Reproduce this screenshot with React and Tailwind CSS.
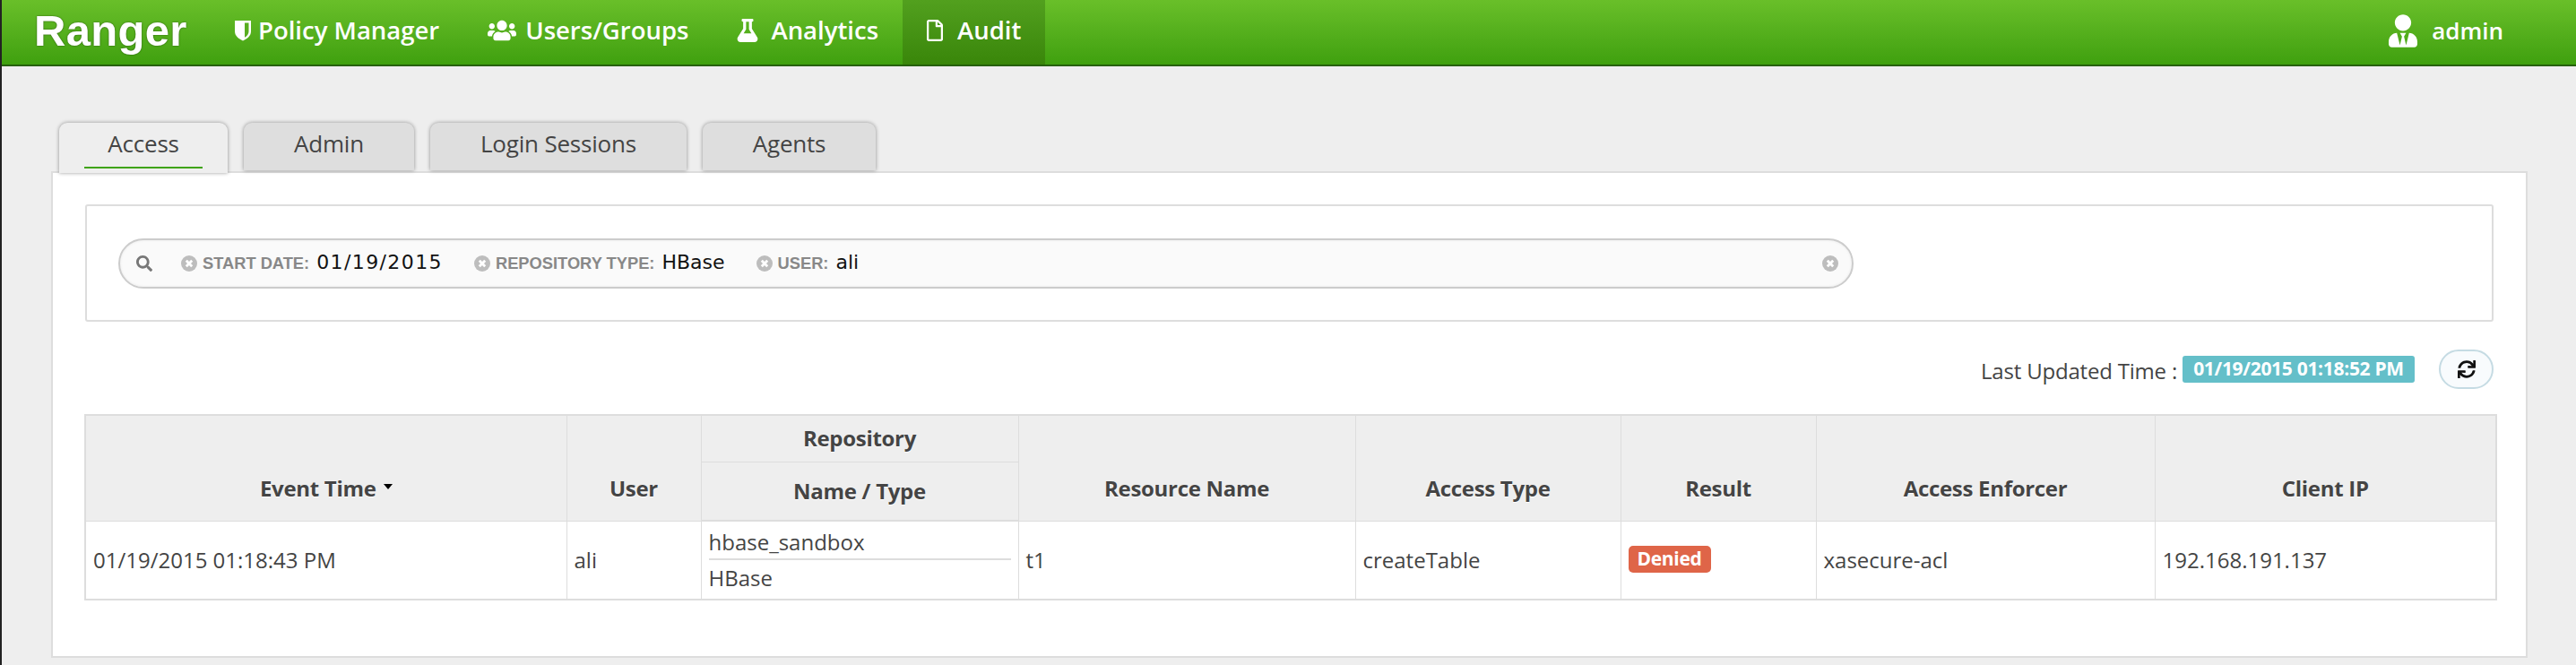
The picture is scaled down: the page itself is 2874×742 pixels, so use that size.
import { FaUsers, FaFlask, FaRegFile, FaUserTie, FaSearch, FaSync } from 'react-icons/fa'

const navLinks = [
  { label: 'Policy Manager', gap: 'gap-[8px]', icon: <ShieldIcon /> },
  { label: 'Users/Groups', gap: 'gap-[10px]', icon: <FaUsers className="w-[32px] h-[28px]" /> },
  { label: 'Analytics', gap: 'gap-[14px]', icon: <FaFlask className="w-[24px] h-[26px]" /> },
  { label: 'Audit', gap: 'gap-[16px]', icon: <FaRegFile className="w-[18px] h-[24px]" />, active: true },
]

const tabs = [
  { label: 'Access', width: 'w-[188px]', active: true },
  { label: 'Admin', width: 'w-[190px]' },
  { label: 'Login Sessions', width: 'w-[286px]' },
  { label: 'Agents', width: 'w-[193px]' },
]

const facets = [
  { label: 'START DATE:', value: '01/19/2015', gap: 'mr-[35px]', spaced: true },
  { label: 'REPOSITORY TYPE:', value: 'HBase', gap: 'mr-[35px]' },
  { label: 'USER:', value: 'ali', gap: '' },
]

function ShieldIcon() {
  return (
    <svg viewBox="0 0 18 24" className="w-[18px] h-[24px]" fill="currentColor">
      <path d="M0 1h18v12c0 5-4 8-9 10.500C4 21 0 18 0 13z" />
      <path d="M11 3.500h4.500V13c0 3.500-2.500 5.500-4.500 6.800z" fill="#58ad1e" />
    </svg>
  )
}

function ClearIcon() {
  return (
    <svg viewBox="0 0 18 20" className="w-[18px] h-[20px] shrink-0">
      <circle cx="9" cy="10" r="9" fill="#bdbdbd" />
      <path d="M5.800 6.800l6.400 6.400M12.200 6.800l-6.400 6.400" stroke="#fff" strokeWidth="2.800" />
    </svg>
  )
}

function Th({ children, className = '', ...rest }) {
  return (
    <th
      {...rest}
      className={`border border-[#ddd] bg-[#eee] text-center font-bold text-[24px] leading-[30px] tracking-[-0.3px] text-[#444] [text-shadow:0_1px_0_#fff] ${className}`}
    >
      {children}
    </th>
  )
}

function Td({ children, className = '' }) {
  return (
    <td className={`border border-[#ddd] px-[8px] text-left text-[24px] text-[#444] ${className}`}>
      {children}
    </td>
  )
}

export default function App() {
  return (
    <div className="w-full h-[742px] overflow-hidden border-l-2 border-[#222] bg-[#eee] font-['Open_Sans',sans-serif]">
      <nav className="flex h-[74px] items-stretch border-b-2 border-[#26600a] bg-gradient-to-b from-[#69bf29] to-[#3fa00e] text-white">
        <a className="ml-[36px] w-[197px] pt-[8px] font-['Liberation_Sans',sans-serif] text-[49px] font-bold leading-[52px] tracking-[0.3px] [text-shadow:0_0_2px_rgba(0,0,0,0.55)]">
          Ranger
        </a>
        <ul className="flex">
          {navLinks.map(link => (
            <li
              key={link.label}
              className={`flex items-center px-[27px] pb-[4px] text-[27.500px] font-semibold ${link.gap} ${link.active ? 'bg-gradient-to-b from-[#52a01e] to-[#398609]' : ''}`}
            >
              {link.icon}
              <span>{link.label}</span>
            </li>
          ))}
        </ul>
        <div className="ml-auto mr-[81px] flex items-center gap-[16px] pb-[4px] text-[26px] font-semibold">
          <FaUserTie className="w-[32px] h-[37px]" />
          <span>admin</span>
        </div>
      </nav>

      <main className="pl-[55px] pr-[54px] pt-[63px]">
        <div className="flex h-[54px] items-start gap-[18px] pl-[9px]">
          {tabs.map(tab => (
            <div
              key={tab.label}
              className={`relative flex flex-col items-center rounded-t-[9px] text-[26px] leading-[34px] tracking-[-0.2px] text-[#444] shadow-[0_0_4px_rgba(0,0,0,0.4)] ${tab.width} ${tab.active ? 'z-10 h-[56px] bg-[#eee] pt-[6px]' : 'h-[53px] bg-[#dedede] pt-[6px]'}`}
            >
              <span>{tab.label}</span>
              {tab.active && <span className="mt-[9px] h-[2px] w-[132px] bg-[#3fa30f]" />}
            </div>
          ))}
        </div>

        <section className="h-[543px] border-2 border-[#ddd] bg-white px-[36px] pt-[35px]">
          <div className="flex h-[131px] items-center rounded-[3px] border-2 border-[#ddd] pl-[35px]">
            <div className="flex h-[56px] w-[1936px] items-center rounded-[28px] border-2 border-[#ccc] bg-[#fafafa] pl-[18px] pr-[15px] shadow-[inset_0_0_3px_rgba(0,0,0,0.08)]">
              <FaSearch className="mr-[32px] w-[18px] h-[18px] text-[#777]" />
              {facets.map(f => (
                <div key={f.label} className={`flex items-center ${f.gap}`}>
                  <ClearIcon />
                  <span className="ml-[6px] font-['Liberation_Sans',sans-serif] text-[18.300px] font-bold text-[#888]">{f.label}</span>
                  <span className={`ml-[8px] pb-[3px] font-['DejaVu_Sans',sans-serif] text-[22px] text-[#111] ${f.spaced ? 'tracking-[1.400px]' : ''}`}>{f.value}</span>
                </div>
              ))}
              <span className="ml-auto"><ClearIcon /></span>
            </div>
          </div>

          <div className="mt-[31px] flex h-[44px] items-center justify-end">
            <span className="mr-[6px] pt-[4px] text-[24px] tracking-[-0.2px] text-[#444]">Last Updated Time :</span>
            <span className="flex h-[30px] w-[259px] items-center justify-center rounded-[3px] bg-[#64bfc9] text-[21px] font-bold tracking-[-0.3px] text-white">
              01/19/2015 01:18:52 PM
            </span>
            <button className="ml-[27px] flex h-[44px] w-[61px] items-center justify-center rounded-[22px] border-2 border-[#c5dbe3] bg-[#f8fbfd] text-[#111]">
              <FaSync className="w-[20px] h-[22px]" />
            </button>
          </div>

          <table className="mt-[28px] -ml-[1px] w-[2690px] table-fixed border-collapse border-2 border-[#ddd]">
            <colgroup>
              <col className="w-[537px]" />
              <col className="w-[150px]" />
              <col className="w-[354px]" />
              <col className="w-[376px]" />
              <col className="w-[296px]" />
              <col className="w-[218px]" />
              <col className="w-[378px]" />
              <col className="w-[381px]" />
            </colgroup>
            <thead>
              <tr className="h-[52px]">
                <Th rowSpan={2} className="align-bottom pb-[21px]">
                  Event Time
                  <span className="relative -top-[8px] ml-[8px] inline-block border-x-[5px] border-t-[6px] border-x-transparent border-t-black" />
                </Th>
                <Th rowSpan={2} className="align-bottom pb-[21px]">User</Th>
                <Th>Repository</Th>
                <Th rowSpan={2} className="align-bottom pb-[21px]">Resource Name</Th>
                <Th rowSpan={2} className="align-bottom pb-[21px]">Access Type</Th>
                <Th rowSpan={2} className="align-bottom pb-[21px]">Result</Th>
                <Th rowSpan={2} className="align-bottom pb-[21px]">Access Enforcer</Th>
                <Th rowSpan={2} className="align-bottom pb-[21px]">Client IP</Th>
              </tr>
              <tr className="h-[66px]">
                <Th className="border-b-2">Name / Type</Th>
              </tr>
            </thead>
            <tbody>
              <tr className="h-[88px]">
                <Td>01/19/2015 01:18:43 PM</Td>
                <Td>ali</Td>
                <Td>
                  <div className="border-b-2 border-[#ddd] pb-[2px] leading-[32px]">hbase_sandbox</div>
                  <div className="pt-[4px] leading-[32px]">HBase</div>
                </Td>
                <Td>t1</Td>
                <Td>createTable</Td>
                <Td>
                  <span className="relative -top-[3px] inline-flex h-[30px] w-[92px] items-center justify-center rounded-[5px] bg-[#df6548] text-[21px] font-bold tracking-[-0.3px] text-white">
                    Denied
                  </span>
                </Td>
                <Td>xasecure-acl</Td>
                <Td>192.168.191.137</Td>
              </tr>
            </tbody>
          </table>
        </section>
      </main>
    </div>
  )
}
